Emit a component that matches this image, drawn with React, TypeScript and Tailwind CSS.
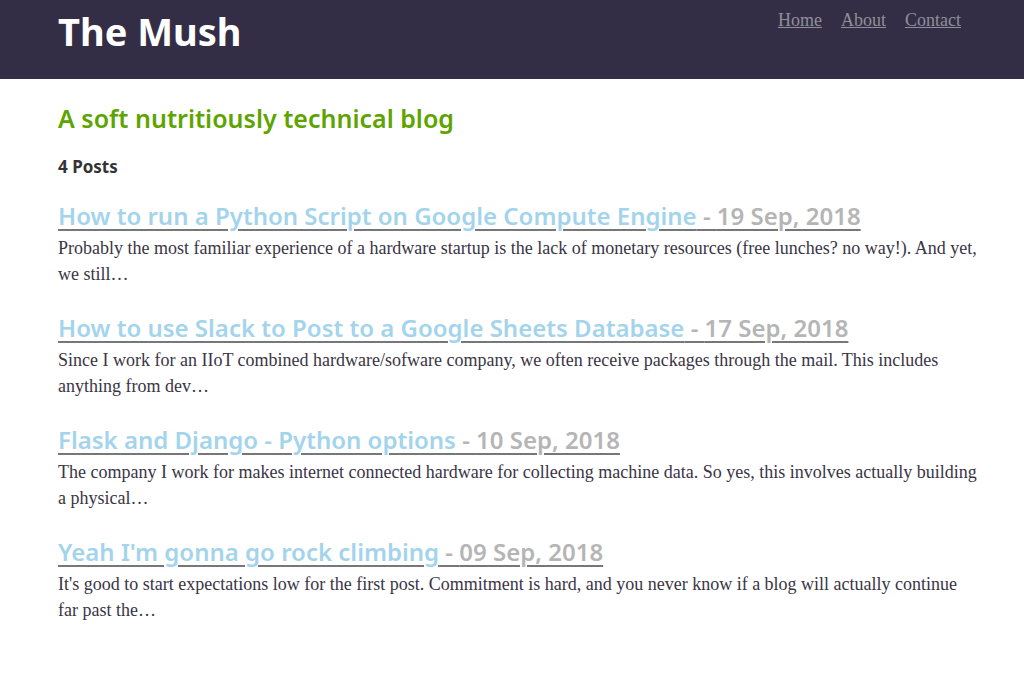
const posts = [
  {
    title: "How to run a Python Script on Google Compute Engine",
    date: "19 Sep, 2018",
    excerpt:
      "Probably the most familiar experience of a hardware startup is the lack of monetary resources (free lunches? no way!). And yet, we still…",
  },
  {
    title: "How to use Slack to Post to a Google Sheets Database",
    date: "17 Sep, 2018",
    excerpt:
      "Since I work for an IIoT combined hardware/sofware company, we often receive packages through the mail. This includes anything from dev…",
  },
  {
    title: "Flask and Django - Python options",
    date: "10 Sep, 2018",
    excerpt:
      "The company I work for makes internet connected hardware for collecting machine data. So yes, this involves actually building a physical…",
  },
  {
    title: "Yeah I'm gonna go rock climbing",
    date: "09 Sep, 2018",
    excerpt:
      "It's good to start expectations low for the first post. Commitment is hard, and you never know if a blog will actually continue far past the…",
  },
];

export default function App() {
  return (
    <div className="min-h-[683px] bg-white font-['Liberation_Serif',serif]">
      {/* Header */}
      <header className="h-[79px] bg-[#332e45]">
        <div className="flex items-start justify-between pl-[58px] pr-[63px]">
          <h1 className="mt-[8px] font-['Noto_Sans',sans-serif] text-[38px] font-bold leading-[46px] text-white">
            The Mush
          </h1>
          <nav className="mt-[9px] flex gap-[19px] text-[18px] leading-[22px] text-[#8f8f99]">
            <a href="#" className="underline">Home</a>
            <a href="#" className="underline">About</a>
            <a href="#" className="underline">Contact</a>
          </nav>
        </div>
      </header>

      {/* Main */}
      <main className="pl-[58px] pr-[46px] pt-[23px] pb-[40px]">
        <h2 className="font-['Noto_Sans',sans-serif] text-[25px] font-semibold leading-[32px] text-[#5ea400]">
          A soft nutritiously technical blog
        </h2>
        <h3 className="mt-[21px] font-['Noto_Sans',sans-serif] text-[17px] font-bold leading-[24px] text-[#333]">
          4 Posts
        </h3>

        <div className="mt-[20px] flex flex-col gap-[24px]">
          {posts.map((p, i) => (
            <article key={i}>
              <a
                href="#"
                className="font-['Noto_Sans',sans-serif] text-[24px] font-semibold leading-[34px] text-[#b5b5b5] underline decoration-[#777] decoration-2 underline-offset-[4px]"
              >
                <span className="text-[#a3d4ec]">{p.title}</span> - {p.date}
              </a>
              <p className="mt-[2px] text-[18px] leading-[26px] text-[#3a3545]">
                {p.excerpt}
              </p>
            </article>
          ))}
        </div>
      </main>
    </div>
  );
}
